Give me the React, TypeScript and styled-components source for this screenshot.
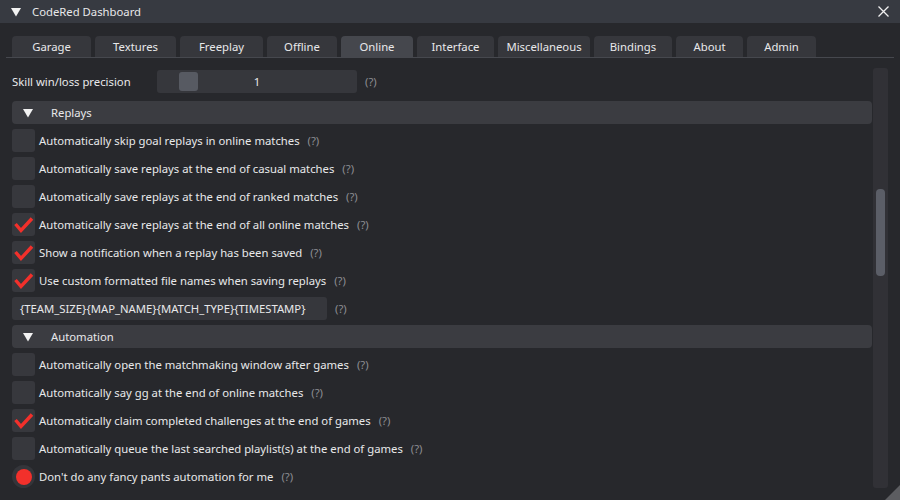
import styled, { createGlobalStyle } from "styled-components"

const GlobalStyle = createGlobalStyle`
    html, body {
        margin: 0;
        padding: 0;
        background: #27282c;
    }
    body {
        font-family: "Noto Sans", "Open Sans", sans-serif;
        font-size: 11.3px;
        color: #e8e8ea;
    }
`

type CheckItem = {
    label: string,
    checked: boolean
}

type TabItem = {
    name: string,
    width: number
}

const tabs: TabItem[] = [
    { name: 'Garage', width: 79 },
    { name: 'Textures', width: 81 },
    { name: 'Freeplay', width: 83 },
    { name: 'Offline', width: 70 },
    { name: 'Online', width: 72 },
    { name: 'Interface', width: 77 },
    { name: 'Miscellaneous', width: 92 },
    { name: 'Bindings', width: 78 },
    { name: 'About', width: 67 },
    { name: 'Admin', width: 69 },
]

const replays: CheckItem[] = [
    { label: 'Automatically skip goal replays in online matches', checked: false },
    { label: 'Automatically save replays at the end of casual matches', checked: false },
    { label: 'Automatically save replays at the end of ranked matches', checked: false },
    { label: 'Automatically save replays at the end of all online matches', checked: true },
    { label: 'Show a notification when a replay has been saved', checked: true },
    { label: 'Use custom formatted file names when saving replays', checked: true },
]

const automation: CheckItem[] = [
    { label: 'Automatically open the matchmaking window after games', checked: false },
    { label: 'Automatically say gg at the end of online matches', checked: false },
    { label: 'Automatically claim completed challenges at the end of games', checked: true },
    { label: 'Automatically queue the last searched playlist(s) at the end of games', checked: false },
]

function Arrow({ size }: Readonly<{ size: number }>) {
    return (
        <svg width={size} height={size} viewBox="0 0 10 10">
            <polygon points="0,1 10,1 5,9.5" fill="#f2f2f2" />
        </svg>
    )
}

function CheckBox({ checked }: Readonly<{ checked: boolean }>) {
    return (
        <StyledBox>
            {checked && (
                <svg width="23" height="23" viewBox="0 0 23 23">
                    <polyline points="3.5,11 9,17.5 20,5.5" fill="none" stroke="#f2302b" strokeWidth="3.4" strokeLinejoin="miter" />
                </svg>
            )}
        </StyledBox>
    )
}

function Help() {
    return <StyledHelp>(?)</StyledHelp>
}

function CheckRow({ item }: Readonly<{ item: CheckItem }>) {
    return (
        <StyledRow>
            <CheckBox checked={item.checked} />
            <span>{item.label}</span>
            <Help />
        </StyledRow>
    )
}

function Section({ title }: Readonly<{ title: string }>) {
    return (
        <StyledHeader>
            <Arrow size={10} />
            <span>{title}</span>
        </StyledHeader>
    )
}

export default function App() {
    return (
        <StyledWindow>
            <GlobalStyle />
            <StyledTitleBar>
                <Arrow size={10} />
                <span className="title">CodeRed Dashboard</span>
                <span className="space"></span>
                <svg width="11" height="11" viewBox="0 0 11 11">
                    <path d="M0.5 0.5 L10.5 10.5 M10.5 0.5 L0.5 10.5" stroke="#f0f0f0" strokeWidth="1.3" />
                </svg>
            </StyledTitleBar>
            <StyledTabBar>
                {tabs.map(tab => (
                    <StyledTab key={tab.name} $width={tab.width} $active={tab.name === 'Online'}>{tab.name}</StyledTab>
                ))}
            </StyledTabBar>
            <StyledMain>
                <StyledList>
                    <StyledRow className="slider-row">
                        <span className="label">Skill win/loss precision</span>
                        <StyledSlider>
                            <span className="grab"></span>
                            <span>1</span>
                        </StyledSlider>
                        <Help />
                    </StyledRow>
                    <Section title="Replays" />
                    {replays.map(item => <CheckRow key={item.label} item={item} />)}
                    <StyledRow>
                        <StyledInput>{'{TEAM_SIZE}{MAP_NAME}{MATCH_TYPE}{TIMESTAMP}'}</StyledInput>
                        <Help />
                    </StyledRow>
                    <Section title="Automation" />
                    {automation.map(item => <CheckRow key={item.label} item={item} />)}
                    <StyledRow>
                        <StyledRadio><span></span></StyledRadio>
                        <span>Don't do any fancy pants automation for me</span>
                        <Help />
                    </StyledRow>
                </StyledList>
                <StyledScrollbar>
                    <span className="grab"></span>
                </StyledScrollbar>
            </StyledMain>
            <StyledGrip />
        </StyledWindow>
    )
}

const StyledWindow = styled.div`
    position: relative;
    width: 900px;
    height: 500px;
    overflow: hidden;
    background: #27282c;
    display: flex;
    flex-direction: column;
`

const StyledTitleBar = styled.div`
    height: 23px;
    background: #373a41;
    display: flex;
    align-items: center;
    padding: 0 11px 0 11px;
    & .title {
        margin-left: 11px;
    }
    & .space {
        flex-grow: 1;
    }
`

const StyledTabBar = styled.div`
    margin: 13px 6px 0 6px;
    padding-left: 6px;
    display: flex;
    gap: 4px;
    border-bottom: 1px solid #46484e;
`

const StyledTab = styled.div<{ $active: boolean, $width: number }>`
    width: ${({ $width }) => $width}px;
    height: 21px;
    flex-shrink: 0;
    display: flex;
    align-items: center;
    justify-content: center;
    border-radius: 4px 4px 0 0;
    background: ${({ $active }) => $active ? '#45474d' : '#36373c'};
`

const StyledMain = styled.div`
    flex: 1;
    display: flex;
    margin: 10px 12px 12px 12px;
    gap: 1px;
    min-height: 0;
`

const StyledList = styled.div`
    flex: 1;
    padding-top: 2px;
    display: flex;
    flex-direction: column;
    gap: 5px;
    overflow: hidden;
    & .slider-row {
        margin-bottom: 3px;
    }
`

const StyledRow = styled.div`
    height: 23px;
    flex-shrink: 0;
    display: flex;
    align-items: center;
    gap: 4px;
    white-space: nowrap;
    & .label {
        width: 141px;
        flex-shrink: 0;
    }
`

const StyledHelp = styled.span`
    color: #8c8d92;
    margin-left: 4px;
`

const StyledBox = styled.div`
    width: 23px;
    height: 23px;
    flex-shrink: 0;
    border-radius: 3px;
    background: #37383d;
    & svg {
        display: block;
    }
`

const StyledRadio = styled.div`
    width: 23px;
    height: 23px;
    flex-shrink: 0;
    border-radius: 50%;
    background: #34353a;
    display: flex;
    align-items: center;
    justify-content: center;
    & span {
        width: 16px;
        height: 16px;
        border-radius: 50%;
        background: #f2302b;
    }
`

const StyledSlider = styled.div`
    position: relative;
    width: 200px;
    height: 23px;
    border-radius: 3px;
    background: #36373c;
    display: flex;
    align-items: center;
    justify-content: center;
    & .grab {
        position: absolute;
        left: 22px;
        top: 2px;
        width: 19px;
        height: 19px;
        border-radius: 3px;
        background: #575a62;
    }
    & span:last-child {
        position: relative;
    }
`

const StyledInput = styled.div`
    width: 315px;
    height: 23px;
    box-sizing: border-box;
    padding: 0 8px;
    border-radius: 3px;
    background: #36373c;
    display: flex;
    align-items: center;
`

const StyledHeader = styled.div`
    height: 23px;
    flex-shrink: 0;
    border-radius: 4px;
    background: #3b3c41;
    display: flex;
    align-items: center;
    padding-left: 11px;
    gap: 18px;
    & svg {
        display: block;
    }
`

const StyledScrollbar = styled.div`
    width: 15px;
    height: 420px;
    border-radius: 3px;
    background: #313136;
    padding-top: 121px;
    box-sizing: border-box;
    display: flex;
    justify-content: center;
    & .grab {
        width: 9px;
        height: 87px;
        border-radius: 4px;
        background: #5b5e67;
    }
`

const StyledGrip = styled.div`
    position: absolute;
    right: 0;
    bottom: 0;
    width: 15px;
    height: 15px;
    background: #5c5d61;
    clip-path: polygon(100% 0, 100% 100%, 0 100%);
`
